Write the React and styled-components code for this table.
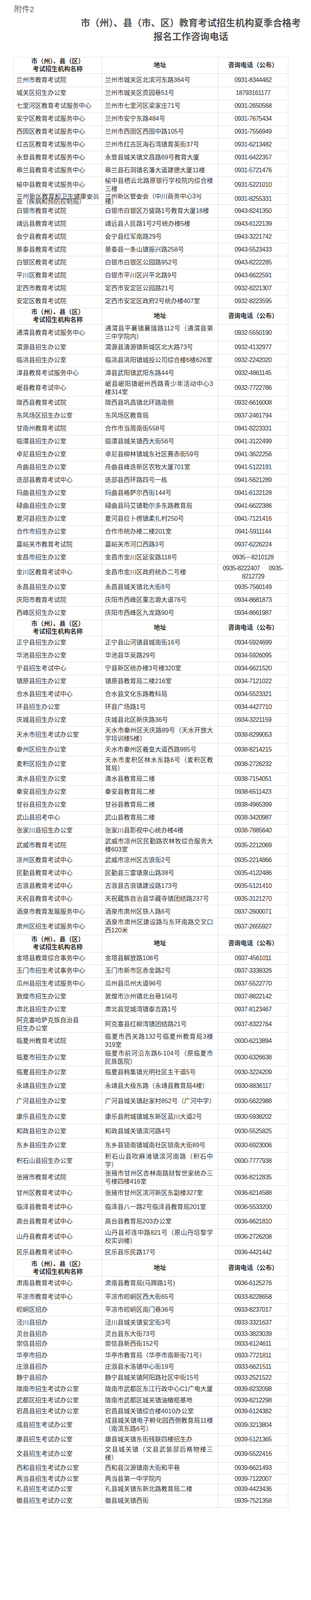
import React from 'react';
import styled, { createGlobalStyle } from 'styled-components';

// the shot is taken in a 4096px tall window, so vertical sizes are
// squeezed to keep the whole 4711px layout inside it
const K = 4096 / 4711;
const v = (px) => +(px * K).toFixed(2);

const GlobalStyle = createGlobalStyle`
  html, body {
    margin: 0;
    padding: 0;
    background: #fff;
  }
  body {
    font-family: "Liberation Sans", "Noto Sans CJK SC", sans-serif;
    color: #333;
  }
`;

const Page = styled.div`
  width: 797px;
  height: ${v(4711)}px;
  box-sizing: border-box;
  padding: ${v(13)}px 0 0 34px;
  overflow: hidden;
`;

const Attachment = styled.div`
  padding-left: 2px;
  font-size: 20px;
  line-height: ${v(30)}px;
  color: #666;
`;

const Title = styled.h1`
  margin: ${v(5)}px 0 0;
  padding-left: 147px;
  text-align: center;
  font-size: 24px;
  line-height: ${v(40)}px;
  font-weight: bold;
  color: #555;
`;

const Table = styled.div`
  margin-top: ${v(40)}px;
  width: 705px;
  box-sizing: border-box;
  border-top: 1px solid #ddd;
  border-left: 1px solid #ddd;
  font-size: 16px;
`;

const Row = styled.div`
  display: grid;
  grid-template-columns: 227px 297px 180px;
  height: ${(p) => v(p.$h)}px;
`;

const pads = {
  name: '0 7px',
  addr: '0 12px 0 7px',
  phone: '0 4px',
};

const Cell = styled.div`
  box-sizing: border-box;
  display: flex;
  flex-direction: column;
  justify-content: center;
  border-right: 1px solid #ddd;
  border-bottom: 1px solid #ddd;
  padding: ${(p) => pads[p.$col]};
  text-align: ${(p) => (p.$col === 'phone' ? 'center' : 'justify')};
  letter-spacing: ${(p) => (p.$col === 'phone' ? '-0.7px' : 'normal')};
  line-height: ${(p) => (p.$tight ? v(15) : v(24))}px;
  color: #333;
  overflow: hidden;
`;

const HeadCell = styled(Cell)`
  padding: 0 7px;
  text-align: center;
  letter-spacing: normal;
  font-weight: bold;
  line-height: ${v(23)}px;
`;

// string, or array of lines split by <br/>
const lines = (val) =>
  Array.isArray(val)
    ? val.map((s, i) => (
        <React.Fragment key={i}>
          {i > 0 && <br />}
          {s}
        </React.Fragment>
      ))
    : val;

const H = (h) => ({ header: true, h });

const rows = [
  H(48),
  ['兰州市教育考试院', '兰州市城关区北滨河东路364号', '0931-8344462', 39],
  ['城关区招生办公室', '兰州市城关区贡园巷51号', '18793161177', 38],
  ['七里河区教育考试服务中心', '兰州市七里河区梁家庄71号', '0931-2650568', 38],
  ['安宁区教育考试服务中心', '兰州市安宁东路484号', '0931-7675434', 38],
  ['西固区教育考试服务中心', '兰州市西固区西固中路105号', '0931-7556949', 37],
  ['红古区教育考试服务中心', '兰州市红古区海石湾镇育英街37号', '0931-6213482', 38],
  ['永登县教育考试服务中心', '永登县城关镇文昌路69号教育大厦', '0931-6422357', 38],
  ['皋兰县教育考试服务中心', '皋兰县石洞镇名藩大道建德大厦11楼', '0931-5721476', 38],
  ['榆中县教育考试服务中心', '榆中县栖云北路原银行学校院内综合楼三楼', '0931-5221010', 49],
  ['兰州新区教育和卫生健康委员会（疾病和预防控制局）', ['兰州新区管委会（中川商务中心3号', '楼）'], '0931-8255331', 33, true],
  ['白银市教育考试院', '白银市白银区万盛路1号教育大厦18楼', '0943-8241350', 38],
  ['靖远县教育考试院', '靖远县人民路1号2号统办楼5楼', '0943-6122139', 38],
  ['会宁县教育考试院', '会宁县红军南路29号', '0943-3221742', 38],
  ['景泰县教育考试院', '景泰县一条山镇振兴路258号', '0943-5523433', 38],
  ['白银区教育考试院', '白银市白银区公园路952号', '0943-8222285', 38],
  ['平川区教育考试院', '白银市平川区兴平北路9号', '0943-6622591', 38],
  ['定西市教育考试院', '定西市安定区公园路21号', '0932-8221307', 38],
  ['安定区教育考试院', '定西市安定区政府2号统办楼407室', '0932-8223595', 38],
  H(49),
  ['通渭县教育考试服务中心', '通渭县平襄镇襄瑞路112号（通渭县第三中学院内）', '0932-5550190', 49],
  ['渭源县招生办公室', '渭源县清源镇新城区北大路73号', '0932-4132977', 38],
  ['临洮县招生办公室', '临洮县洮阳镇城投公司综合楼6楼626室', '0932-2242020', 38],
  ['漳县教育考试服务中心', '漳县武阳镇武阳东路44号', '0932-4861145', 38],
  ['岷县教育考试中心', '岷县岷阳镇岷州西路青少年活动中心3楼314室', '0932-7722786', 49],
  ['陇西县教育考试院', '陇西县巩昌镇北环路南侧', '0932-6616008', 38],
  ['东风场区招生办公室', '东风场区教育局', '0937-2461794', 38],
  ['甘南州教育考试院', '合作市当周南街558号', '0941-8223331', 38],
  ['临潭县招生办公室', '临潭县城关镇西大街56号', '0941-3122499', 38],
  ['卓尼县招生办公室', '卓尼县柳林镇城东社区赛赤街59号', '0941-3622256', 38],
  ['舟曲县招生办公室', '舟曲县峰迭新区农牧大厦701室', '0941-5122191', 38],
  ['迭部县教育考试中心', '迭部县西环路四号一栋', '0941-5621289', 38],
  ['玛曲县招生办公室', '玛曲县格萨尔西街144号', '0941-6122128', 38],
  ['碌曲县招生办公室', '碌曲县玛艾镇勒尔多东路教育局', '0941-6622386', 38],
  ['夏河县招生办公室', '夏河县拉卜楞镇柔扎村250号', '0941-7121416', 38],
  ['合作市招生办公室', '合作市统办楼二楼201室', '0941-5911144', 38],
  ['嘉峪关市教育考试院', '嘉峪关市河口西路3号', '0937-6226224', 38],
  ['金昌市招生办公室', '金昌市金川区延安路118号', '0935－8210128', 38],
  ['金川区教育考试中心', '金昌市金川区政府统办二号楼', ['0935-8222407\u3000\u00a0 0935-', '8212729'], 49],
  ['永昌县招生办公室', '永昌县城关镇北大街8号', '0935-7560149', 38],
  ['庆阳市教育考试院', '庆阳市西峰区董志塬大道76号', '0934-8681873', 38],
  ['西峰区招生办公室', '庆阳市西峰区九龙路90号', '0934-8661987', 38],
  H(49),
  ['正宁县招生办公室', '正宁县山河镇县城南街16号', '0934-5924699', 38],
  ['华池县招生办公室', '华池县华吴路29号', '0934-5926095', 38],
  ['宁县招生考试中心', '宁县新区统办楼3号楼320室', '0934-6621520', 38],
  ['镇原县招生办公室', '镇原县教育局二楼216室', '0934-7121022', 38],
  ['合水县招生考试中心', '合水县文化东路教科局', '0934-5523321', 38],
  ['环县招生办公室', '环县广场路1号', '0934-4427710', 38],
  ['庆城县招生办公室', '庆城县北区新庆路36号', '0934-3221159', 38],
  ['天水市招生考试办公室', '天水市秦州区天庆路89号（天水开放大学培训楼5楼）', '0938-8299053', 49],
  ['秦州区招生办公室', '天水市秦州区羲皇大道西路985号', '0938-8214215', 38],
  ['麦积区招生办公室', '天水市麦积区林水东路6号（麦积区教育局）', '0938-2726232', 49],
  ['清水县招生办公室', '清水县教育局二楼', '0938-7154051', 38],
  ['秦安县招生办公室', '秦安县教育局二楼', '0938-6511423', 38],
  ['甘谷县招生办公室', '甘谷县教育局二楼', '0938-4965399', 38],
  ['武山县招考中心', '武山县教育局二楼', '0938-3420987', 38],
  ['张家川县招生办公室', '张家川县影视中心统办楼4楼', '0938-7885640', 38],
  ['武威市教育考试院', '武威市凉州区民勤路农林牧综合服务大楼603室', '0935-2212069', 49],
  ['凉州区教育考试中心', '武威市凉州区古浪街2号', '0935-2214866', 38],
  ['民勤县教育考试中心', '民勤县三雷镇泉山路38号', '0935-4122486', 38],
  ['古浪县教育考试中心', '古浪县古浪镇建设路173号', '0935-5121410', 38],
  ['天祝县教育考试中心', '天祝藏族自治县华藏寺镇团结路237号', '0935-3121270', 38],
  ['酒泉市教育发展服务中心', '酒泉市肃州区铁人路6号', '0937-2600071', 38],
  ['肃州区招生考试服务中心', '酒泉市肃州区建设路与东环南路交叉口西120米', '0937-2655927', 49],
  H(50),
  ['金塔县教育综合事务中心', '金塔县解放路108号', '0937-4561011', 37],
  ['玉门市招生考试事务中心', '玉门市新市区赤金路2号', '0937-3338326', 38],
  ['瓜州县招生考试服务中心', '瓜州县瓜州大道96号', '0937-5522770', 38],
  ['敦煌市招生办公室', '敦煌市沙州镇北台巷156号', '0937-8822142', 38],
  ['肃北县招生办公室', '肃北县党城湾镇泰吉路1号', '0937-8123467', 38],
  [['阿克塞哈萨克族自治县', '招生办公室'], '阿克塞县红柳湾镇团结路21号', '0937-8322764', 49],
  ['临夏州教育考试院', '临夏市西关路132号临夏州教育局3楼319室', '0930-6213894', 49],
  ['临夏市招生办公室', '临夏市前河沿东路6-104号（原临夏市民族医院）', '0930-6326638', 49],
  ['临夏县招生办公室', '临夏县韩集镇光明社区主干道5号', '0930-3224209', 38],
  ['永靖县招生办公室', '永靖县大极东路（永靖县教育局4楼）', '0930-8836117', 42],
  ['广河县招生办公室', '广河县城关镇赵家村852号（广河中学）', '0930-5622988', 49],
  ['康乐县招生办公室', '康乐县附城镇城东新区蓝川大道2号', '0930-5938202', 42],
  ['和政县招生办公室', '和政县城关镇滨河路4号', '0930-5525825', 42],
  ['东乡县招生办公室', '东乡县锁南镇城南社区锁南大街89号', '0930-6923006', 42],
  ['积石山县招生办公室', '积石山县吹麻滩镇滨河南路（积石中学）', '0930-7777938', 49],
  ['张掖市教育考试院', '张掖市甘州区杏林南路财智世家统办三号楼四楼416室', '0936-8212835', 49],
  ['甘州区教育考试中心', '张掖市甘州区滨河新区东副楼327室', '0936-8214588', 42],
  ['临泽县教育考试中心', '临泽县八一路2号临泽县教育局201室', '0936-5533200', 42],
  ['高台县教育考试中心', '高台县教育局203办公室', '0936-6621810', 42],
  ['山丹县教育考试中心', '山丹县祁连中路821号（原山丹培黎学校实训楼）', '0936-2726208', 49],
  ['民乐县教育考试中心', '民乐县乐民路17号', '0936-4421442', 42],
  H(49),
  ['肃南县教育考试中心', '肃南县教育局(马蹄路1号)', '0936-6125276', 42],
  ['平凉市教育考试中心', '平凉市崆峒区西大街65号', '0933-8228658', 38],
  ['崆峒区招办', '平凉市崆峒区南门巷36号', '0933-8237017', 38],
  ['泾川县招办', '泾川县城关镇安定街3号', '0933-3321637', 38],
  ['灵台县招办', '灵台县东大街73号', '0933-3823039', 28],
  ['崇信县招办', '崇信县新西街152号', '0933-6124611', 30],
  ['华亭市招办', '华亭市教育局（华亭市南新街71号）', '0933-7721811', 39],
  ['庄浪县招办', '庄浪县水洛镇中心街19号', '0933-6621511', 29],
  ['静宁县招办', '静宁县城关镇阿阳路社区中街15号', '0933-2521522', 34],
  ['陇南市招生考试办公室', '陇南市武都区东江行政中心C1广电大厦', '0939-8232098', 33],
  ['武都区招生考试办公室', '陇南市武都区城关镇油橄榄基地', '0939-8212298', 34],
  ['宕昌县招生考试办公室', '宕昌县城关镇综合楼4010办公室', '0939-6124382', 31],
  ['成县招生考试办公室', '成县城关镇电子孵化园西侧教育局11楼（南滨东路6号）', '0939-3213804', 49],
  ['康县招生考试办公室', '康县城关镇东街残联四楼招生办', '0939-5121365', 36],
  ['文县招生考试办公室', '文县城关镇（文县武装部后格物楼三楼）', '0939-5522416', 49],
  ['西和县招生考试办公室', '西和县汉源镇南大街和平巷', '0939-6621493', 35],
  ['两当县招生考试办公室', '两当县第一中学院内', '0939-7122007', 28],
  ['礼县招生考试办公室', '礼县城关镇东新北路教育局二楼', '0939-4423436', 32],
  ['徽县招生考试办公室', '徽县城关镇西街', '0939-7521358', 38],
];

const HeaderRow = ({ h }) => (
  <Row $h={h}>
    <HeadCell $col="name">
      <div>
        市（州）、县（区）
        <br />
        考试招生机构名称
      </div>
    </HeadCell>
    <HeadCell $col="addr">地址</HeadCell>
    <HeadCell $col="phone">咨询电话（公布）</HeadCell>
  </Row>
);

const App = () => (
  <Page>
    <GlobalStyle />
    <Attachment>附件2</Attachment>
    <Title>
      市（州）、县（市、区）教育考试招生机构夏季合格考
      <br />
      报名工作咨询电话
    </Title>
    <Table>
      {rows.map((r, i) => {
        if (r.header) return <HeaderRow key={i} h={r.h} />;
        const [name, addr, phone, h, tight] = r;
        return (
          <Row key={i} $h={h}>
            <Cell $col="name" $tight={tight}>
              <div>{lines(name)}</div>
            </Cell>
            <Cell $col="addr" $tight={tight}>
              <div>{lines(addr)}</div>
            </Cell>
            <Cell $col="phone">
              <div>{lines(phone)}</div>
            </Cell>
          </Row>
        );
      })}
    </Table>
  </Page>
);

export default App;
